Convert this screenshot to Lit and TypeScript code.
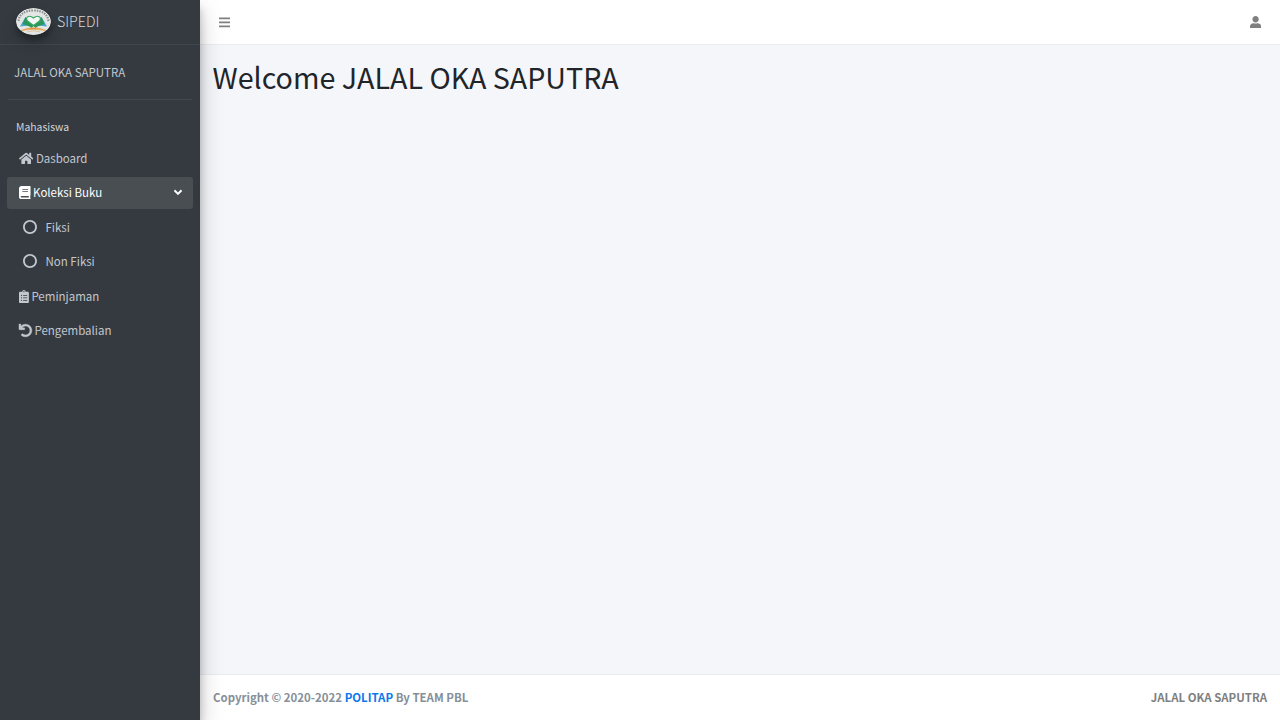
import { LitElement, html, css, svg } from "lit";
import { customElement, property } from "lit/decorators.js";

const ICONS: Record<string, { w: number; d: string }> = {
  home: { w: 576, d: "M280.37 148.26L96 300.11V464a16 16 0 0 0 16 16l112.06-.29a16 16 0 0 0 15.92-16V368a16 16 0 0 1 16-16h64a16 16 0 0 1 16 16v95.64a16 16 0 0 0 16 16.05L464 480a16 16 0 0 0 16-16V300L295.67 148.26a12.19 12.19 0 0 0-15.3 0zM571.6 251.47L488 182.56V44.05a12 12 0 0 0-12-12h-56a12 12 0 0 0-12 12v72.61L318.47 43a48 48 0 0 0-61 0L4.34 251.47a12 12 0 0 0-1.6 16.9l25.5 31A12 12 0 0 0 45.15 301l235.22-193.74a12.19 12.19 0 0 1 15.3 0L530.9 301a12 12 0 0 0 16.9-1.6l25.5-31a12 12 0 0 0-1.7-16.93z" },
  book: { w: 448, d: "M448 360V24c0-13.3-10.7-24-24-24H96C43 0 0 43 0 96v320c0 53 43 96 96 96h328c13.3 0 24-10.7 24-24v-16c0-7.5-3.5-14.3-8.9-18.7-4.2-15.4-4.2-59.3 0-74.7 5.4-4.3 8.9-11.1 8.9-18.6zM128 134c0-3.3 2.7-6 6-6h212c3.3 0 6 2.7 6 6v20c0 3.3-2.7 6-6 6H134c-3.3 0-6-2.7-6-6v-20zm0 64c0-3.3 2.7-6 6-6h212c3.3 0 6 2.7 6 6v20c0 3.3-2.7 6-6 6H134c-3.3 0-6-2.7-6-6v-20zm253.4 250H96c-17.7 0-32-14.3-32-32 0-17.6 14.4-32 32-32h285.4c-1.9 17.1-1.9 46.9 0 64z" },
  circle: { w: 512, d: "M256 2C116 2 2 116 2 256s114 254 254 254 254-114 254-254S396 2 256 2zm0 442c-104 0-188-84-188-188S152 68 256 68s188 84 188 188-84 188-188 188z" },
  clipboard: { w: 384, d: "M336 64h-80c0-35.300-28.700-64-64-64s-64 28.700-64 64H48C21.500 64 0 85.500 0 112v352c0 26.500 21.500 48 48 48h288c26.500 0 48-21.500 48-48V112c0-26.500-21.500-48-48-48zM96 424c-13.300 0-24-10.700-24-24s10.700-24 24-24 24 10.700 24 24-10.700 24-24 24zm0-96c-13.300 0-24-10.700-24-24s10.700-24 24-24 24 10.700 24 24-10.700 24-24 24zm0-96c-13.300 0-24-10.700-24-24s10.700-24 24-24 24 10.700 24 24-10.700 24-24 24zm96-192c13.300 0 24 10.700 24 24s-10.700 24-24 24-24-10.700-24-24 10.700-24 24-24zm128 368c0 4.400-3.600 8-8 8H168c-4.400 0-8-3.600-8-8v-16c0-4.400 3.600-8 8-8h144c4.400 0 8 3.600 8 8v16zm0-96c0 4.400-3.600 8-8 8H168c-4.400 0-8-3.600-8-8v-16c0-4.400 3.600-8 8-8h144c4.400 0 8 3.600 8 8v16zm0-96c0 4.400-3.600 8-8 8H168c-4.400 0-8-3.600-8-8v-16c0-4.400 3.600-8 8-8h144c4.400 0 8 3.600 8 8v16z" },
  undo: { w: 512, d: "M212.333 224.333H12c-6.627 0-12-5.373-12-12V12C0 5.373 5.373 0 12 0h48c6.627 0 12 5.373 12 12v78.112C117.773 39.279 184.260 7.470 258.175 8.007c136.906.994 246.448 111.623 246.157 248.532C504.041 393.258 393.120 504 256.333 504c-64.089 0-122.496-24.313-166.510-64.215-5.099-4.622-5.334-12.554-.467-17.420l33.967-33.967c4.474-4.474 11.662-4.717 16.401-.525C170.760 415.336 211.580 432 256.333 432c97.268 0 176-78.716 176-176 0-97.267-78.716-176-176-176-58.496 0-110.280 28.476-142.274 72.333h98.274c6.627 0 12 5.373 12 12v48c0 6.627-5.373 12-12 12z" },
  bars: { w: 448, d: "M16 132h416c8.837 0 16-7.163 16-16V76c0-8.837-7.163-16-16-16H16C7.163 60 0 67.163 0 76v40c0 8.837 7.163 16 16 16zm0 160h416c8.837 0 16-7.163 16-16v-40c0-8.837-7.163-16-16-16H16c-8.837 0-16 7.163-16 16v40c0 8.837 7.163 16 16 16zm0 160h416c8.837 0 16-7.163 16-16v-40c0-8.837-7.163-16-16-16H16c-8.837 0-16 7.163-16 16v40c0 8.837 7.163 16 16 16z" },
  user: { w: 448, d: "M224 256c70.700 0 128-57.300 128-128S294.700 0 224 0 96 57.300 96 128s57.300 128 128 128zm89.600 32h-16.700c-22.200 10.200-46.900 16-72.900 16s-50.600-5.800-72.900-16h-16.700C60.200 288 0 348.200 0 422.400V464c0 26.500 21.500 48 48 48h352c26.500 0 48-21.500 48-48v-41.600c0-74.200-60.200-134.400-134.400-134.400z" },
  angle: { w: 320, d: "M143 352.300L7 216.300c-9.400-9.400-9.400-24.600 0-33.900l22.600-22.600c9.400-9.400 24.600-9.400 33.900 0l96.400 96.400 96.400-96.400c9.400-9.400 24.600-9.400 33.900 0l22.600 22.600c9.400 9.400 9.400 24.600 0 33.900l-136 136c-9.200 9.400-24.400 9.400-33.800 0z" },
};

@customElement("fa-icon")
class FaIcon extends LitElement {
  @property() name = "home";
  @property({ type: Number }) size = 12.8;
  static styles = css`
    :host { display: inline-flex; flex: none; }
    svg { display: block; fill: currentColor; }
    .bold { stroke: currentColor; stroke-width: 18; overflow: visible; }
  `;
  render() {
    const i = ICONS[this.name];
    return html`<svg class=${this.name === "undo" ? "bold" : ""} viewBox="0 0 ${i.w} 512" width=${(this.size * i.w) / 512} height=${this.size}>${svg`<path d=${i.d}></path>`}</svg>`;
  }
}

@customElement("app-root")
class AppRoot extends LitElement {
  static styles = css`
    :host {
      display: grid;
      grid-template-columns: 200px 1fr;
      height: 100vh;
      overflow: hidden;
      font-family: "Noto Sans CJK JP", "Noto Sans", sans-serif;
      font-size: 11.5px;
      line-height: 19.2px;
      color: #212529;
      background: #f4f6f9;
    }
    * { box-sizing: border-box; }
    a { text-decoration: none; color: inherit; }
    .sidebar {
      z-index: 1;
      background: #343a40;
      color: #c2c7d0;
      box-shadow: 0 11px 22px rgba(0, 0, 0, 0.22), 0 8px 8px rgba(0, 0, 0, 0.2);
    }
    .brand {
      display: flex;
      align-items: center;
      gap: 6px;
      height: 45px;
      padding: 0 0 1px 16px;
      border-bottom: 1px solid #3f464d;
      font-size: 14.2px;
      font-weight: 300;
      color: #d3d5d7;
    }
    .logo {
      display: block;
      width: 35px;
      height: 27px;
      border-radius: 50%;
      box-shadow: 0 8px 16px rgba(0, 0, 0, 0.19), 0 5px 5px rgba(0, 0, 0, 0.23);
    }
    .person {
      height: 54.5px;
      margin: 0 8px;
      padding: 18px 0 0 6px;
      border-bottom: 1px solid #41484f;
    }
    .section { padding: 17.5px 16px 0; height: 43px; font-size: 10.4px; color: #d0d4db; }
    nav { display: flex; flex-direction: column; gap: 2.600px; padding: 0 7px; }
    .item {
      display: flex;
      align-items: center;
      height: 32px;
      padding: 0 11px 1px 12px;
      gap: 2.500px;
      border-radius: 3px;
    }
    .first { padding-bottom: 0; }
    .active { background: #494e53; color: #fff; }
    .sub { padding-left: 16px; gap: 8.500px; }
    .sub fa-icon { margin-bottom: 1px; }
    .arrow { display: flex; margin-left: auto; }
    .page { display: grid; grid-template-rows: 45px 1fr 46px; min-width: 0; }
    header, footer { display: flex; align-items: center; justify-content: space-between; background: #fff; }
    header { border-bottom: 1px solid #e9ecf0; padding: 0 19px 0; color: #808080; }
    main { padding: 13px 12.500px; }
    h1 { margin: 0; font-size: 28.65px; font-weight: 400; line-height: 38.4px; white-space: nowrap; }
    footer { border-top: 1px solid #e9ecf0; padding: 0 13px; color: #869099; font-size: 11.45px; font-weight: 700; }
    .link { color: #0c78ee; }
    .right { color: #7f7f7f; }
  `;

  render() {
    return html`
      <aside class="sidebar">
        <a class="brand">
          <svg class="logo" viewBox="0 0 35 27">
            <ellipse cx="17.500" cy="13.500" rx="17.500" ry="13.500" fill="#e3e6e5"></ellipse>
            <path d="M2.500 13Q4 2.500 17.500 2.500T32.500 13" fill="none" stroke="#8b908e" stroke-width="2.200" stroke-dasharray="1.500 1.100"></path>
            <path d="M4 18.500L9.500 9l3 8.500z" fill="#48a5d0"></path>
            <path d="M31 18.500L25.500 9l-3 8.500z" fill="#48a5d0"></path>
            <path d="M9.500 9L6.500 16l7 2.500 2 1.500 2-2z" fill="#2d9659"></path>
            <path d="M25.500 9L28.500 16l-7 2.500-2 1.500-2-2z" fill="#2d9659"></path>
            <path d="M17.500 17.500l-6-4.500c-3-4 2-6.500 6-3 4-3.500 9-1 6 3z" fill="#f3f8f5" stroke="#37a567" stroke-width="1.200"></path>
            <path d="M5 22.500Q17.500 17 30 22.500 17.500 20 5 22.500z" fill="#e49a42" stroke="#e49a42" stroke-width=".6"></path>
            <path d="M11 24q6.500-2.500 13 0" fill="none" stroke="#d8bd98" stroke-width=".8"></path>
          </svg>
          <span>SIPEDI</span>
        </a>
        <div class="person">JALAL OKA SAPUTRA</div>
        <div class="section">Mahasiswa</div>
        <nav>
          <a class="item first"><fa-icon name="home"></fa-icon><span>Dasboard</span></a>
          <a class="item active"><fa-icon name="book" size="13.2"></fa-icon><span>Koleksi Buku</span><span class="arrow"><fa-icon name="angle"></fa-icon></span></a>
          <a class="item sub"><fa-icon name="circle" size="14"></fa-icon><span>Fiksi</span></a>
          <a class="item sub"><fa-icon name="circle" size="14"></fa-icon><span>Non Fiksi</span></a>
          <a class="item"><fa-icon name="clipboard" size="13.2"></fa-icon><span>Peminjaman</span></a>
          <a class="item"><fa-icon name="undo" size="13"></fa-icon><span>Pengembalian</span></a>
        </nav>
      </aside>
      <div class="page">
        <header><fa-icon name="bars"></fa-icon><fa-icon name="user"></fa-icon></header>
        <main><h1>Welcome JALAL OKA SAPUTRA</h1></main>
        <footer>
          <span>Copyright © 2020-2022 <a class="link">POLITAP</a> By TEAM PBL</span>
          <span class="right">JALAL OKA SAPUTRA</span>
        </footer>
      </div>
    `;
  }
}
